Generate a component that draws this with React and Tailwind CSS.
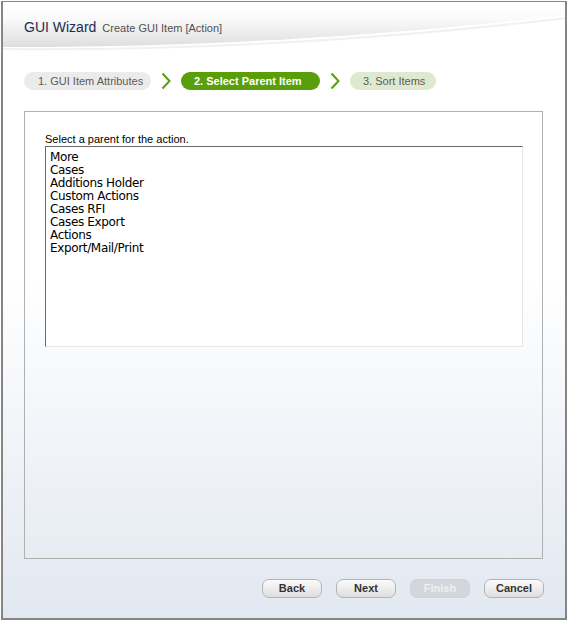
import React from 'react';

const items = ['More', 'Cases', 'Additions Holder', 'Custom Actions', 'Cases RFI', 'Cases Export', 'Actions', 'Export/Mail/Print'];

const Chevron = () => (
  <svg width="10" height="18" viewBox="0 0 10 18" className="shrink-0">
    <polyline points="1.5,1.5 8.5,9 1.5,16.5" fill="none" stroke="#5a9e0a" strokeWidth="2" />
  </svg>
);

const WizardButton = ({ label, disabled }) => (
  <button
    className={`w-[60px] h-[19px] rounded-[7px] border text-[11px] font-bold leading-none ${
      disabled
        ? 'border-[#cfd3d8] bg-[#d3d7dc] text-[#eef0f3]'
        : 'border-[#b3b3b3] bg-linear-to-b from-[#fbfbfb] to-[#dedede] text-[#333]'
    }`}
  >
    {label}
  </button>
);

export default function App() {
  return (
    <div className="w-[568px] h-[621px] bg-white p-px font-['Liberation_Sans',Arial,sans-serif]">
      <div className="relative w-full h-full border-t border-l-2 border-r-2 border-b-2 border-[#858585] bg-linear-to-b from-white from-45% to-[#e2e8f1] flex flex-col overflow-hidden">
        <svg className="absolute left-0 top-0" width="564" height="60" viewBox="0 0 564 60">
          <defs>
            <linearGradient id="hdr" x1="0" y1="0" x2="0" y2="1">
              <stop offset="0" stopColor="#ffffff" />
              <stop offset="0.35" stopColor="#fbfbfb" />
              <stop offset="1" stopColor="#dedede" />
            </linearGradient>
          </defs>
          <path d="M0,0 H564 V13 C420,30 220,46 0,45 Z" fill="url(#hdr)" />
          <path d="M0,47 C220,49 420,33 564,16" fill="none" stroke="#f1f1f1" strokeWidth="2" />
        </svg>

        <div className="relative flex items-baseline gap-[6px] pl-[21px] pt-[15px] h-[70px]">
          <span className="text-[14px] text-[#1d2a55]">GUI Wizard</span>
          <span className="text-[11px] text-[#505050]">Create GUI Item [Action]</span>
        </div>

        <div className="flex items-center pl-[21px] h-[18px]">
          <div className="h-[18px] w-[127px] rounded-full bg-[#ebebeb] text-[11px] text-[#5c5c5c] flex items-center pl-[14px]">
            1. GUI Item Attributes
          </div>
          <div className="w-[30px] flex justify-center"><Chevron /></div>
          <div className="h-[18px] w-[139px] rounded-full bg-[#5a9e0a] text-[11px] font-bold text-white flex items-center pl-[13px]">
            2. Select Parent Item
          </div>
          <div className="w-[30px] flex justify-center"><Chevron /></div>
          <div className="h-[18px] w-[86px] rounded-full bg-[#dfe9cf] text-[11px] text-[#5c5c5c] flex items-center pl-[13px]">
            3. Sort Items
          </div>
        </div>

        <div className="ml-[21px] mr-[22px] mt-[21px] h-[448px] border border-[#b0b0b0] pt-[21px] pl-[20px]">
          <div className="text-[11px] text-black leading-[13px]">
            Select a parent for the action.
          </div>
          <div className="w-[478px] h-[201px] border-t border-l border-[#6a6a6a] border-r border-b border-r-[#e6e6e6] border-b-[#e6e6e6] bg-white pl-[4px] pt-[4px]">
            {items.map((it) => (
              <div key={it} className="text-[12px] leading-[13px] text-black font-['DejaVu_Sans',Tahoma,sans-serif] tracking-[-0.35px]">
                {it}
              </div>
            ))}
          </div>
        </div>

        <div className="flex justify-end gap-[14px] pr-[21px] mt-[20px]">
          <WizardButton label="Back" />
          <WizardButton label="Next" />
          <WizardButton label="Finish" disabled />
          <WizardButton label="Cancel" />
        </div>
      </div>
    </div>
  );
}
